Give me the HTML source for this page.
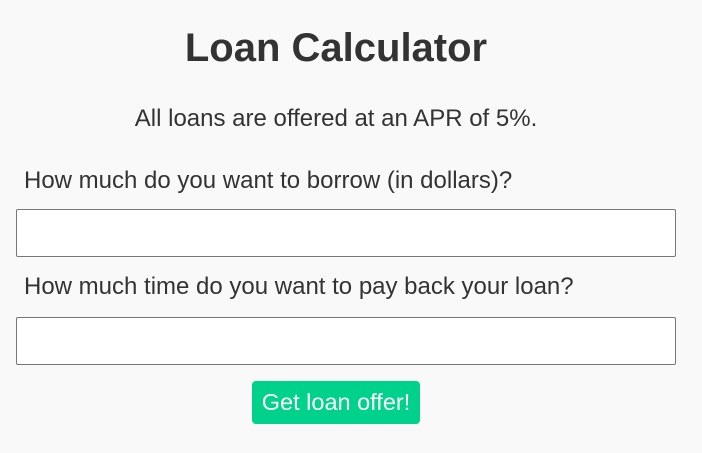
<!DOCTYPE html>
<html><head><style>
body{margin:0;width:702px;height:453px;background:#f9f9f9;font-family:"Liberation Sans",sans-serif;color:#333;position:relative;overflow:hidden}
.a{position:absolute;white-space:nowrap}
h1{position:absolute;margin:0;left:0;width:672px;text-align:center;top:26px;font-size:40px;font-weight:bold;color:#333}
.in{position:absolute;left:16px;width:658px;height:46px;border:1px solid #777;background:#fff;border-radius:2px}
.btn{position:absolute;left:252px;top:381px;width:168px;height:43px;background:#00d18b;border-radius:4px;color:#fff;font-size:23.5px;line-height:43px;text-align:center}
</style></head><body>
<h1>Loan Calculator</h1>
<div class="a" style="left:0;width:672px;text-align:center;top:105px;font-size:24px">All loans are offered at an APR of 5%.</div>
<div class="a" style="left:24px;top:167px;font-size:24px">How much do you want to borrow (in dollars)?</div>
<div class="in" style="top:209px"></div>
<div class="a" style="left:24px;top:273px;font-size:24px">How much time do you want to pay back your loan?</div>
<div class="in" style="top:317px"></div>
<div class="btn">Get loan offer!</div>
</body></html>
